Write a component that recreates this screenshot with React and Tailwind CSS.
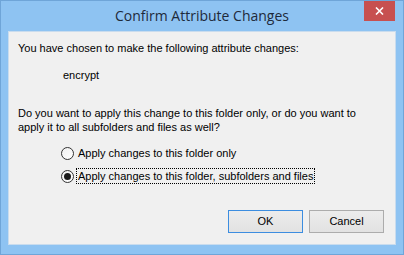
import React, { useState } from 'react';

const Radio = ({ checked, label, focused, onClick }) => (
  <div className="flex items-center h-4 cursor-default" onClick={onClick}>
    <span className="relative flex h-[13px] w-[13px] items-center justify-center rounded-full border border-[#333333] bg-gradient-to-br from-[#f0f0f0] to-white">
      {checked && <span className="h-[7px] w-[7px] rounded-full bg-[#1a1a1a]" />}
    </span>
    <span className={`ml-[3px] px-[1px] leading-[14px] ${focused ? 'outline outline-1 outline-dotted outline-black' : ''}`}>
      {label}
    </span>
  </div>
);

export default function App() {
  const [choice, setChoice] = useState(1);

  return (
    <div className="w-[404px] h-[255px] flex flex-col border border-[#6fa5d8] bg-[#8ec3f2] font-['Liberation_Sans',sans-serif] text-[11px] text-black whitespace-nowrap">
      {/* Title bar */}
      <div className="relative h-[30px] flex items-center justify-center">
        <span className="text-[14px] text-[#1e2a3a] font-['Open_Sans',sans-serif] -mt-[1px]">Confirm Attribute Changes</span>
        <button className="absolute right-[8px] top-0 h-[20px] w-[31px] flex items-center justify-center bg-[#c75050]">
          <svg width="9" height="8" viewBox="0 0 9 8">
            <path d="M1 0.5 L8 7.5 M8 0.5 L1 7.5" stroke="white" strokeWidth="1.6" />
          </svg>
        </button>
      </div>

      {/* Client area */}
      <div className="flex-1 mx-[7px] mr-[7px] mb-[9px] flex flex-col bg-[#f0f0f0] border border-[#c9dcee] pl-[9px] pr-[11px] pt-[9px]">
        <p className="leading-[15px]">You have chosen to make the following attribute changes:</p>
        <p className="leading-[15px] mt-[12px] pl-[45px]">encrypt</p>
        <p className="leading-[14px] mt-[23px]">
          Do you want to apply this change to this folder only, or do you want to
          <br />
          apply it to all subfolders and files as well?
        </p>
        <div className="mt-[11px] pl-[43px] flex flex-col gap-[7px]">
          <Radio checked={choice === 0} label="Apply changes to this folder only" onClick={() => setChoice(0)} />
          <Radio checked={choice === 1} focused label="Apply changes to this folder, subfolders and files" onClick={() => setChoice(1)} />
        </div>
        <div className="mt-auto mb-[11px] flex justify-end gap-[6px]">
          <button className="h-[23px] w-[75px] border border-[#3c8de0] bg-gradient-to-b from-[#ececec] to-[#e2e2e2]">OK</button>
          <button className="h-[23px] w-[75px] border border-[#acacac] bg-gradient-to-b from-[#ececec] to-[#e2e2e2]">Cancel</button>
        </div>
      </div>
    </div>
  );
}
